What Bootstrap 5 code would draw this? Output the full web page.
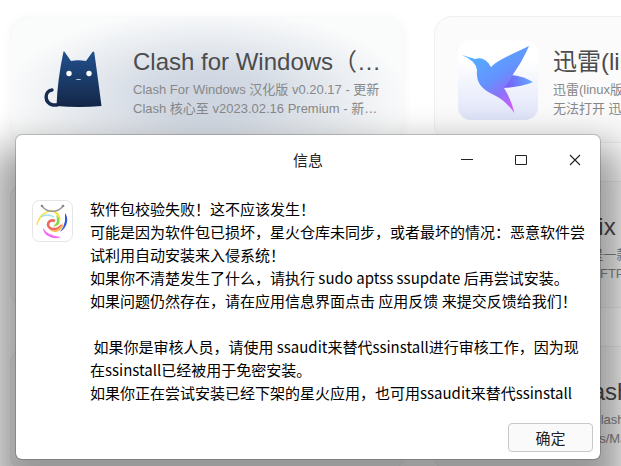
<!DOCTYPE html>
<html lang="zh-CN">
<head>
<meta charset="utf-8">
<meta name="viewport" content="width=device-width, initial-scale=1">
<title>信息</title>
<link rel="stylesheet" href="https://cdn.jsdelivr.net/npm/bootstrap@5.3.0/dist/css/bootstrap.min.css">
<style>
body { font-family: "Liberation Sans", "Noto Sans CJK SC", sans-serif; background: #fff; }
.store { min-height: 100vh; }
.store-grid { display: grid; grid-template-columns: repeat(2, minmax(394px, 1fr)); gap: 38px 30px; padding: 16px 10px 0; }
.app-tile { height: 127px; padding: 0 18px 0 23px; gap: 15px; border: 1px solid #f0f0f0; border-radius: 18px; background: #fbfbfb; }
.app-tile.glow { padding-left: 24px; padding-right: 15px; gap: 18px; border-color: #f8f9f9; background: radial-gradient(ellipse 200px 84px at 50% 62%, #ccd4e0 0, #d3dae4 30%, #e6eaef 62%, #fafbfb 100%); box-shadow: 0 2px 12px rgba(0,0,0,.04); }
.app-icon { width: 80px; height: 80px; flex: none; }
.app-text { padding-top: 4px; }
.app-name { font-size: 24px; line-height: 32px; color: #4c4c4c; margin: 0 0 2px; font-weight: 400; }
.app-note { font-size: 13px; line-height: 19px; color: #888; margin: 0; }
.dialog-window { position: absolute; top: 135px; left: 16px; right: 21px; background: #fff; border-radius: 6px; box-shadow: 0 0 0 1px rgba(0,0,0,.18), 0 32px 38px 22px rgba(0,0,0,.39); font-family: "Noto Sans CJK SC", sans-serif; color: #000; }
.title-bar { height: 50px; }
.title-bar h1 { font-size: 15px; line-height: 50px; margin: 0; font-weight: 400; color: #222; }
.window-btn { width: 54px; height: 50px; padding: 0 0 4px 4px; border: 0; background: none; color: #222; }
.dialog-content { padding: 12px 14px 0 16px; gap: 17px; }
.spark-icon { width: 41px; height: 42px; margin-top: 3px; flex: none; }
.message { font-size: 15px; line-height: 23px; white-space: pre-wrap; margin: 0; }
.dialog-actions { padding: 19px 7px 7px; }
.ok-btn { width: 85px; height: 29px; padding: 0; border: 1px solid #c8c8c8; border-radius: 4px; background: #fafafa; color: #222; font-size: 15px; line-height: 27px; }
</style>
<script src="https://cdn.jsdelivr.net/npm/bootstrap@5.3.0/dist/js/bootstrap.bundle.min.js"></script>
</head>
<body>
<div class="store position-relative vh-100 overflow-hidden">
  <main class="store-grid">
    <article class="app-tile glow d-flex align-items-center">
      <svg class="app-icon" viewBox="0 0 80 80" aria-hidden="true">
        <defs><linearGradient id="cat" x1="0" y1="0" x2="0" y2="1"><stop offset="0" stop-color="#21508d"/><stop offset="1" stop-color="#142747"/></linearGradient></defs>
        <path d="M22 65H18C9 63 9 51 17 50" fill="none" stroke="#172c51" stroke-width="3.4" stroke-linecap="round"/>
        <path d="M28.500 11.500Q29.500 11 30 12.500L36 21Q43 19.500 51 21L57.500 12Q58.500 11 59.300 12.500Q63 39 66.500 66Q44 68 21.500 66Q22.500 39 28.500 11.500Z" fill="url(#cat)"/>
        <circle cx="34" cy="33.500" r="2.700" fill="#fff"/><circle cx="54" cy="33.500" r="2.700" fill="#fff"/>
        <path d="M40.500 40Q42 38.500 43.500 39Q45 38.500 46.500 40Z" fill="#c4cedd"/>
      </svg>
      <div class="app-text text-nowrap overflow-hidden">
        <h2 class="app-name">Clash for Windows（…</h2>
        <p class="app-note">Clash For Windows 汉化版 v0.20.17 - 更新</p>
        <p class="app-note">Clash 核心至 v2023.02.16 Premium - 新…</p>
      </div>
    </article>
    <article class="app-tile d-flex align-items-center">
      <svg class="app-icon" viewBox="0 0 80 80" aria-hidden="true">
        <defs>
          <linearGradient id="sky" x1="0" y1="0" x2="0" y2="1"><stop offset=".25" stop-color="#fff"/><stop offset="1" stop-color="#dfe4f9"/></linearGradient>
          <linearGradient id="bird" x1=".1" y1=".1" x2=".65" y2="1"><stop offset="0" stop-color="#52b3ff"/><stop offset=".5" stop-color="#6492ff"/><stop offset=".72" stop-color="#8874f8"/><stop offset="1" stop-color="#d45cff"/></linearGradient>
          <linearGradient id="tail" x1="0" y1=".5" x2="1" y2=".4"><stop offset="0" stop-color="#7956fa"/><stop offset="1" stop-color="#60adff"/></linearGradient>
        </defs>
        <rect width="80" height="80" rx="13" fill="url(#sky)"/>
        <path d="M53 35Q65 36 75 42Q64 47 45 48Z" fill="url(#tail)"/>
        <path d="M4 15L17 19Q27 16 33 27C42 18 58 13 71 6Q68 13 64 20L63 22L54 36Q51 43 46 48Q53 59 56.500 73Q47 60 36 55C22 49 18 41 19 30Q18 21 4 15Z" fill="url(#bird)"/>
      </svg>
      <div class="app-text text-nowrap overflow-hidden">
        <h2 class="app-name">迅雷(linux版)</h2>
        <p class="app-note">迅雷(linux版)如果</p>
        <p class="app-note">无法打开 迅雷请重试</p>
      </div>
    </article>
    <article class="app-tile"></article>
    <article class="app-tile d-flex align-items-center">
      <div class="app-icon"></div>
      <div class="app-text text-nowrap overflow-hidden">
        <h2 class="app-name">Netrix</h2>
        <p class="app-note">Netrix 是一款下载工具</p>
        <p class="app-note">HTTP、FTP 下载</p>
      </div>
    </article>
    <article class="app-tile"></article>
    <article class="app-tile d-flex align-items-center">
      <div class="app-icon"></div>
      <div class="app-text text-nowrap overflow-hidden">
        <h2 class="app-name">XClash</h2>
        <p class="app-note">Better Clash 工具</p>
        <p class="app-note">Windows/Mac/Linux</p>
      </div>
    </article>
  </main>

  <section class="dialog-window" role="dialog" aria-labelledby="dialog-title">
    <header class="title-bar position-relative d-flex justify-content-end">
      <h1 id="dialog-title" class="position-absolute start-0 end-0 text-center pe-none">信息</h1>
      <button type="button" class="window-btn ms-auto" aria-label="最小化"><svg width="14" height="14" viewBox="0 0 14 14"><path d="M1 5.500H13" stroke="currentColor"/></svg></button>
      <button type="button" class="window-btn" aria-label="最大化"><svg width="14" height="14" viewBox="0 0 14 14"><path d="M1.500 1.500H12.500V10.500H1.500Z" fill="none" stroke="currentColor"/></svg></button>
      <button type="button" class="window-btn" aria-label="关闭"><svg width="14" height="14" viewBox="0 0 14 14"><path d="M2 1L12 11M12 1L2 11" stroke="currentColor" stroke-width="1.100"/></svg></button>
    </header>
    <div class="dialog-content d-flex align-items-start">
      <svg class="spark-icon" viewBox="0 0 41 42" aria-hidden="true">
        <rect x=".5" y=".5" width="40" height="41" rx="7" fill="#fff" stroke="#e5e5e5"/>
        <path d="M5 25C7 14 18 8 24 13C29 17 27 24 22 26" fill="none" stroke="#fae04c" stroke-width="1.500"/>
        <path d="M18 10Q28 10 29 21Q25 13 18 10Z" fill="#fae04c"/>
        <path d="M9 17Q15 13 22 17" fill="none" stroke="#9fe1f2" stroke-width="1.300"/>
        <path d="M24 15Q30 20 26 25L21 27Q27 22 24 15Z" fill="#83d94b"/>
        <path d="M23 21C16 18 13 27 20 29Q26 30 30 25" fill="none" stroke="#ef6861" stroke-width="2.600"/>
        <path d="M17 29Q25 33 31 23Q31 31 24 32Q19 32 17 29Z" fill="#fcb75b"/>
        <path d="M33 13Q36 17 35 22Q34 28 28 32Q32 27 33 21Z" fill="#3558d8"/>
        <path d="M11 28Q16 36 29 37Q23 40 16 36Q11 33 11 28Z" fill="#f66df5"/>
        <path d="M10 6C15 13 26 13 31 6" fill="none" stroke="#999" stroke-width="1.300"/>
        <circle cx="10" cy="6" r="1.300" fill="#888"/><circle cx="31" cy="6" r="1.300" fill="#888"/>
      </svg>
      <p class="message">软件包校验失败！这不应该发生！
可能是因为软件包已损坏，星火仓库未同步，或者最坏的情况：恶意软件尝试利用自动安装来入侵系统！
如果你不清楚发生了什么，请执行 sudo aptss ssupdate 后再尝试安装。
如果问题仍然存在，请在应用信息界面点击 应用反馈 来提交反馈给我们！

 如果你是审核人员，请使用 ssaudit来替代ssinstall进行审核工作，因为现在ssinstall已经被用于免密安装。
如果你正在尝试安装已经下架的星火应用，也可用ssaudit来替代ssinstall</p>
    </div>
    <footer class="dialog-actions d-flex justify-content-end">
      <button type="button" class="ok-btn">确定</button>
    </footer>
  </section>
</div>
</body>
</html>
